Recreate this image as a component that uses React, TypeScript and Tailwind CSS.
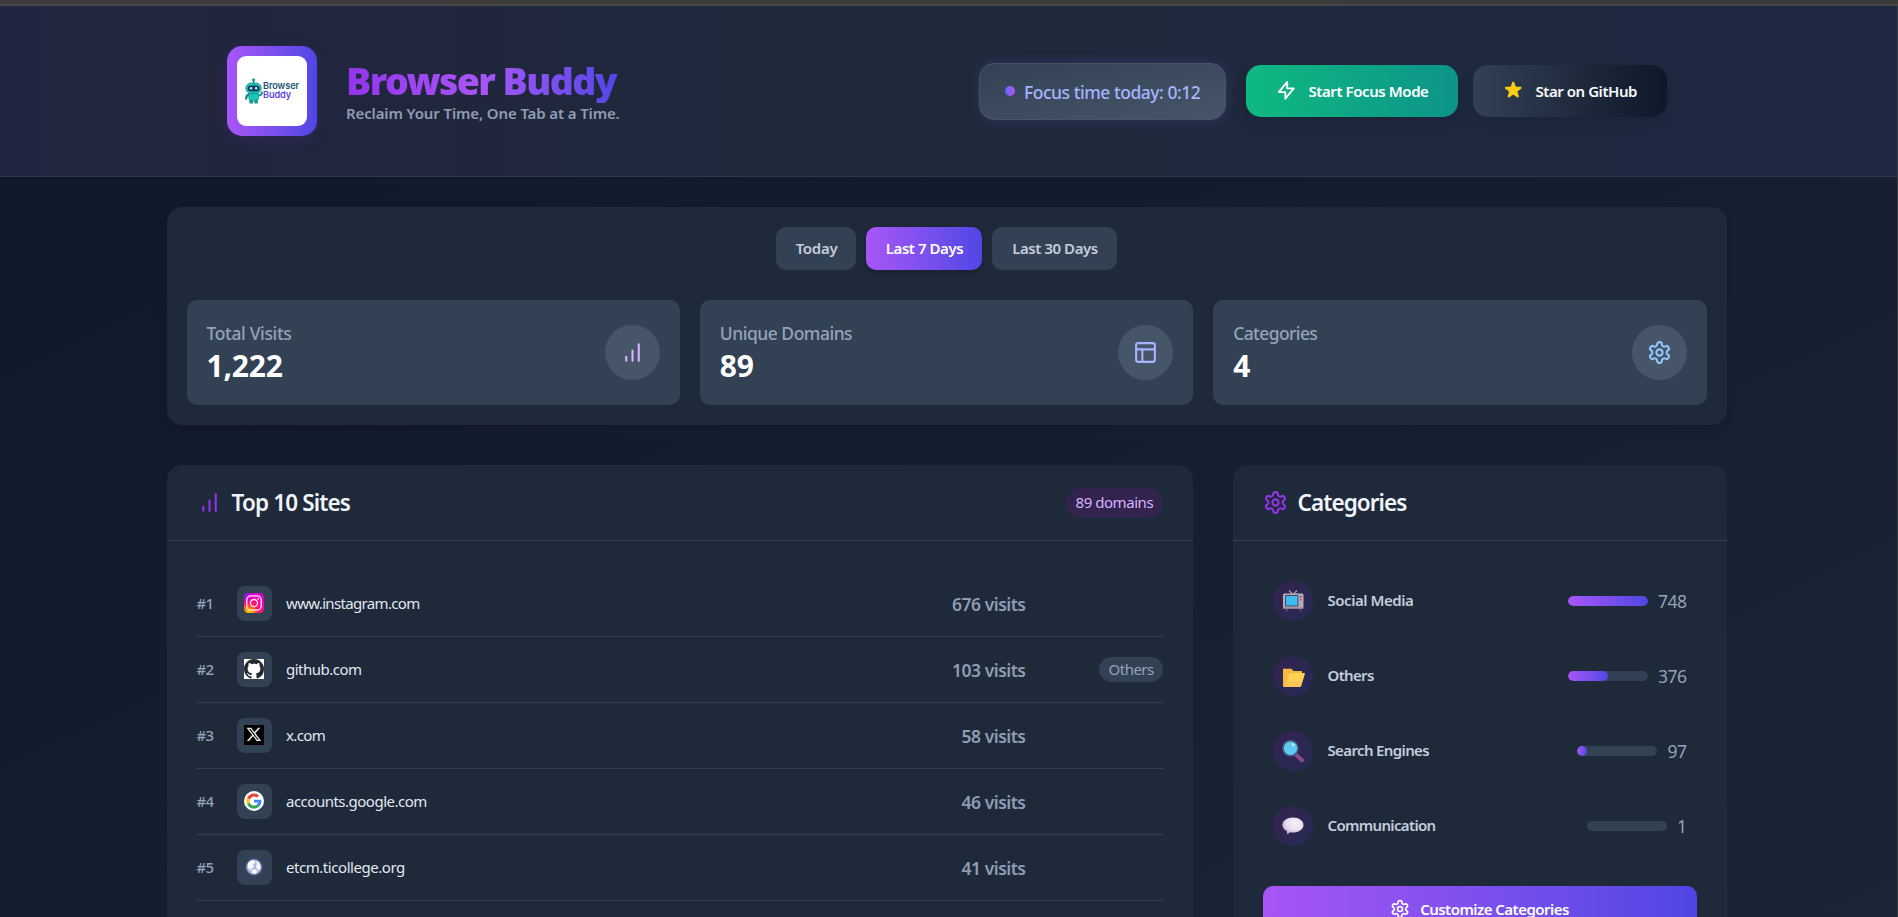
import type { ReactNode } from "react";

function BarsIcon({ className }: { className: string }) {
  return (
    <svg viewBox="0 0 24 24" fill="none" stroke="currentColor" strokeWidth="2" strokeLinecap="round" className={className}>
      <path d="M12 20V10M18 20V4M6 20v-4" />
    </svg>
  );
}

function GearIcon({ className }: { className: string }) {
  return (
    <svg viewBox="0 0 24 24" fill="none" stroke="currentColor" strokeWidth="2" strokeLinecap="round" strokeLinejoin="round" className={className}>
      <path d="M12.22 2h-.44a2 2 0 0 0-2 2v.18a2 2 0 0 1-1 1.73l-.43.25a2 2 0 0 1-2 0l-.15-.08a2 2 0 0 0-2.73.73l-.22.38a2 2 0 0 0 .73 2.73l.15.1a2 2 0 0 1 1 1.72v.51a2 2 0 0 1-1 1.74l-.15.09a2 2 0 0 0-.73 2.73l.22.38a2 2 0 0 0 2.73.73l.15-.08a2 2 0 0 1 2 0l.43.25a2 2 0 0 1 1 1.73V20a2 2 0 0 0 2 2h.44a2 2 0 0 0 2-2v-.18a2 2 0 0 1 1-1.73l.43-.25a2 2 0 0 1 2 0l.15.08a2 2 0 0 0 2.73-.73l.22-.39a2 2 0 0 0-.73-2.73l-.15-.08a2 2 0 0 1-1-1.74v-.5a2 2 0 0 1 1-1.74l.15-.09a2 2 0 0 0 .73-2.73l-.22-.38a2 2 0 0 0-2.73-.73l-.15.08a2 2 0 0 1-2 0l-.43-.25a2 2 0 0 1-1-1.73V4a2 2 0 0 0-2-2z" />
      <circle cx="12" cy="12" r="3" />
    </svg>
  );
}

function LayoutIcon({ className }: { className: string }) {
  return (
    <svg viewBox="0 0 24 24" fill="none" stroke="currentColor" strokeWidth="2" strokeLinecap="round" strokeLinejoin="round" className={className}>
      <rect x="3" y="3" width="18" height="18" rx="2" />
      <path d="M3 9h18M9 21V9" />
    </svg>
  );
}

function Robot() {
  return (
    <svg viewBox="0 0 18 26" className="h-[26px] w-[18px] shrink-0">
      <circle cx="8.6" cy="2" r="1.7" fill="#17a8a8" />
      <path d="M8.6 3v3" stroke="#1a5070" strokeWidth="1" />
      <path d="M3.5 16.5Q.8 18 1.2 20.6" stroke="#1a7a8c" strokeWidth="2.2" fill="none" strokeLinecap="round" />
      <path d="M13.5 17.5q2.8 0 3.6-3" stroke="#1a9a9c" strokeWidth="2.2" fill="none" strokeLinecap="round" />
      <rect x="4.4" y="21" width="3.6" height="4.6" rx="1.2" fill="#139a94" />
      <rect x="9.2" y="21" width="3.6" height="4.6" rx="1.2" fill="#139a94" />
      <rect x="3.8" y="14.5" width="9.8" height="8.2" rx="2.6" fill="#18c8b4" stroke="#147f86" strokeWidth=".6" />
      <rect x=".9" y="5" width="15.4" height="10.6" rx="5.2" fill="#1bcab8" stroke="#147f86" strokeWidth=".7" />
      <rect x="2.7" y="7.6" width="11.8" height="6" rx="3" fill="#123f63" />
      <circle cx="6.1" cy="10.3" r="1.2" fill="#bff5f2" />
      <circle cx="11.1" cy="10.3" r="1.2" fill="#bff5f2" />
    </svg>
  );
}

function Instagram() {
  return (
    <svg viewBox="0 0 20 20" className="size-5">
      <defs>
        <radialGradient id="ig" cx="0.2" cy="1.05" r="1.15">
          <stop offset="0" stopColor="#ffd600" />
          <stop offset=".22" stopColor="#ff9a00" />
          <stop offset=".45" stopColor="#ff1a5e" />
          <stop offset=".75" stopColor="#ff00a8" />
          <stop offset="1" stopColor="#d800d0" />
        </radialGradient>
        <radialGradient id="ig2" cx="0" cy="0" r=".6">
          <stop offset="0" stopColor="#5a1cff" />
          <stop offset="1" stopColor="#b400ff" stopOpacity="0" />
        </radialGradient>
      </defs>
      <rect width="20" height="20" rx="4.5" fill="url(#ig)" />
      <rect width="20" height="20" rx="4.5" fill="url(#ig2)" />
      <g fill="none" stroke="#fff" strokeOpacity=".9" strokeWidth="1.3">
        <rect x="2.800" y="2.800" width="14.400" height="14.400" rx="4.200" />
        <circle cx="10" cy="10" r="3.500" />
      </g>
      <circle cx="14.200" cy="5.800" r=".9" fill="#fff" />
    </svg>
  );
}

function Github() {
  return (
    <svg viewBox="0 0 16 16" className="size-5 bg-white">
      <path
        fill="#24292e"
        d="M8 0C3.58 0 0 3.58 0 8c0 3.54 2.29 6.53 5.47 7.59.4.07.55-.17.55-.38 0-.19-.01-.82-.01-1.49-2.01.37-2.53-.49-2.69-.94-.09-.23-.48-.94-.82-1.13-.28-.15-.68-.52-.01-.53.63-.01 1.08.58 1.23.82.72 1.21 1.87.87 2.33.66.07-.52.28-.87.51-1.07-1.78-.2-3.64-.89-3.64-3.95 0-.87.31-1.59.82-2.15-.08-.2-.36-1.02.08-2.12 0 0 .67-.21 2.2.82.64-.18 1.32-.27 2-.27s1.36.09 2 .27c1.53-1.04 2.2-.82 2.2-.82.44 1.1.16 1.92.08 2.12.51.56.82 1.27.82 2.15 0 3.07-1.87 3.75-3.65 3.95.29.25.54.73.54 1.48 0 1.07-.01 1.93-.01 2.2 0 .21.15.46.55.38A8.01 8.01 0 0 0 16 8c0-4.42-3.58-8-8-8z"
      />
    </svg>
  );
}

function XLogo() {
  return (
    <svg viewBox="0 0 20 20" className="size-5 bg-black">
      <path
        transform="translate(1.700 1.900) scale(.68)"
        fill="#e5e5e5"
        d="M18.24 1.25h3.31l-7.23 8.26 8.5 11.24h-6.65l-5.21-6.82-5.97 6.82H1.68l7.73-8.84L1.25 1.25h6.83l4.71 6.24zm-1.16 17.52h1.83L7.08 3.13H5.12z"
      />
    </svg>
  );
}

function Google() {
  return (
    <svg viewBox="0 0 20 20" className="size-5">
      <circle cx="10" cy="10" r="10" fill="#fff" />
      <g transform="translate(2.4 2.4) scale(.317)">
        <path fill="#FFC107" d="M10.53 28.59A14.5 14.5 0 0 1 9.77 24c0-1.6.27-3.14.76-4.59l-7.98-6.19A23.99 23.99 0 0 0 0 24c0 3.87.92 7.53 2.56 10.78z" />
        <path fill="#EA4335" d="M24 9.5c3.54 0 6.71 1.22 9.21 3.6l6.85-6.85C35.9 2.38 30.47 0 24 0 14.62 0 6.51 5.38 2.56 13.22l7.98 6.19C12.43 13.72 17.74 9.5 24 9.5z" />
        <path fill="#4285F4" d="M46.98 24.55c0-1.57-.15-3.09-.38-4.55H24v9.02h12.94c-.58 2.96-2.26 5.48-4.78 7.18l7.73 6c4.51-4.18 7.09-10.36 7.09-17.65z" />
        <path fill="#34A853" d="M24 48c6.48 0 11.93-2.13 15.89-5.81l-7.73-6c-2.15 1.45-4.92 2.3-8.16 2.3-6.26 0-11.57-4.22-13.47-9.91l-7.98 6.19C6.51 42.62 14.62 48 24 48z" />
      </g>
    </svg>
  );
}

function Globe() {
  return (
    <svg viewBox="0 0 20 20" className="size-5">
      <circle cx="10" cy="10" r="9" fill="#6468b0" opacity=".35" />
      <circle cx="10" cy="10" r="7.9" fill="#7c80c0" />
      <circle cx="10" cy="10" r="7" fill="#b0b8da" />
      <path fill="#f6f8ff" d="M3.800 7c1-2.400 3-3.600 5.700-3.900L11.500 5 9 7.500l1.200 2-1.800 1.500L6.500 13 3.800 11zM12 3.500l3 2 1.800 4-.8 3.500-3-.5-1-3 1-2.500zM7.500 13l3-1 3 2-1.500 2.800-3.500-.3z" />
    </svg>
  );
}

function Tv() {
  return (
    <svg viewBox="0 0 24 24" className="size-6">
      <path d="M8 1.500l3.500 3.500M16 1.500L12.500 5" stroke="#a9a0ae" strokeWidth="1.200" />
      <path d="M6.500 20l-1.300 2.500M18.800 20l1.200 2.500" stroke="#6b4a74" strokeWidth="1.600" />
      <rect x="2" y="4.500" width="20.500" height="15.500" rx="1.500" fill="#b8aebb" />
      <path d="M2 18.500h20.500v0a1.500 1.500 0 0 1-1.500 1.500H3.500A1.500 1.500 0 0 1 2 18.500z" fill="#8d7d95" />
      <rect x="4" y="6" width="13.500" height="11.500" rx="1" fill="#4d4356" />
      <rect x="5" y="7" width="11.500" height="9.500" fill="#3cbcf4" />
      <circle cx="19.800" cy="7.800" r="1" fill="#6b5a74" />
      <circle cx="19.800" cy="10.800" r="1" fill="#d0407a" />
    </svg>
  );
}

function Folder() {
  return (
    <svg viewBox="0 0 24 24" className="size-6">
      <path d="M2 4.700h8.500l2 2.300h8.500v4L6 23H3.500A1.500 1.500 0 0 1 2 21.500z" fill="#f9b844" />
      <path d="M9 9h14.200c.6 0 .9.500.7 1L20 22.300c-.2.500-.5.800-1 .8H2.700z" fill="#ffd352" />
      <path d="M5.400 17.200h16.200L20 22.300c-.2.500-.5.800-1 .8H2.700z" fill="#fdbf5b" opacity=".7" />
    </svg>
  );
}

function Magnifier() {
  return (
    <svg viewBox="0 0 24 24" className="size-6">
      <path d="M15.800 16.500l5.200 4.700" stroke="#8b4a86" strokeWidth="4.200" strokeLinecap="round" />
      <path d="M13.500 14l2.500 2.500" stroke="#5b5a78" strokeWidth="2" />
      <circle cx="9.500" cy="9.300" r="7.500" fill="#5ccbee" stroke="#4b5a86" strokeWidth="1.600" />
      <circle cx="12.300" cy="5.800" r="1.400" fill="#c9f1fb" />
    </svg>
  );
}

function Bubble() {
  return (
    <svg viewBox="0 0 24 24" className="size-6">
      <defs>
        <radialGradient id="bub" cx=".6" cy=".35" r=".7">
          <stop offset="0" stopColor="#f6f0f9" />
          <stop offset=".6" stopColor="#e6dcec" />
          <stop offset="1" stopColor="#b9a4c6" />
        </radialGradient>
      </defs>
      <path d="M12 3.600c6 0 10.500 3.200 10.500 7.400S18 18.600 12 18.600c-1 0-2-.1-2.900-.3-.8.900-2 1.600-3.300 2 .3-1 .3-2 0-3.200C3.200 15.800 1.400 13.600 1.400 11c0-4.200 4.600-7.400 10.600-7.400z" fill="url(#bub)" />
    </svg>
  );
}

const stats: { label: string; value: string; track: string; icon: ReactNode }[] = [
  { label: "Total Visits", value: "1,222", track: "tracking-[-0.36px]", icon: <BarsIcon className="size-[25px] text-[#d8b4fe]" /> },
  { label: "Unique Domains", value: "89", track: "tracking-[-0.5px]", icon: <LayoutIcon className="size-[25px] text-[#a5b4fc]" /> },
  { label: "Categories", value: "4", track: "tracking-[-0.6px]", icon: <GearIcon className="size-[25px] text-[#93c5fd]" /> },
];

const sites: { host: string; visits: number; track: string; icon: ReactNode; tag?: string }[] = [
  { host: "www.instagram.com", visits: 676, track: "tracking-[-0.66px]", icon: <Instagram /> },
  { host: "github.com", visits: 103, track: "tracking-[-0.5px]", icon: <Github />, tag: "Others" },
  { host: "x.com", visits: 58, track: "tracking-[-0.6px]", icon: <XLogo /> },
  { host: "accounts.google.com", visits: 46, track: "tracking-[-0.5px]", icon: <Google /> },
  { host: "etcm.ticollege.org", visits: 41, track: "tracking-[-0.45px]", icon: <Globe /> },
];

const categories: { name: string; count: number; track: string; icon: ReactNode }[] = [
  { name: "Social Media", count: 748, track: "tracking-[-0.46px]", icon: <Tv /> },
  { name: "Others", count: 376, track: "tracking-[-0.66px]", icon: <Folder /> },
  { name: "Search Engines", count: 97, track: "tracking-[-0.63px]", icon: <Magnifier /> },
  { name: "Communication", count: 1, track: "tracking-[-0.65px]", icon: <Bubble /> },
];

const barWidths: Record<number, number> = { 748: 80, 376: 40, 97: 10, 1: 0 };

function Header() {
  return (
    <header className="flex h-[171px] justify-center border-b border-[#2b374a] bg-linear-to-r from-[#22253f] via-[#1e293b] to-[#1f2943] pr-[3px]">
      <div className="flex h-[134px] w-[1440px] items-center justify-between pt-[1px]">
        <div className="flex items-center gap-[30px] pt-[34px]">
          <div className="flex size-[90px] items-center justify-center rounded-[15px] bg-linear-to-r from-[#a855f7] to-[#4f46e5] shadow-[0_4px_14px_rgba(147,51,234,0.12)]">
            <div className="flex size-[70px] items-center justify-center rounded-[9px] bg-white">
              <Robot />
              <div className="flex flex-col gap-px font-['Inter'] text-[9.2px] leading-[8px] font-semibold tracking-[-0.1px]">
                <div className="text-[#1d5475]">Browser</div>
                <div className="text-[#5b45e0]">Buddy</div>
              </div>
            </div>
          </div>
          <div className="-ml-px">
            <h1 className="bg-linear-to-r from-[#9333ea] via-[#a855f7] to-[#4f46e5] bg-clip-text text-[37.5px] leading-[44px] font-black tracking-[-1.6px] text-transparent">
              Browser Buddy
            </h1>
            <p className="text-[15px] leading-[20px] font-semibold tracking-[-0.12px] text-[#8f9db2]">Reclaim Your Time, One Tab at a Time.</p>
          </div>
        </div>
        <div className="flex items-center pt-[34px]">
          <div className="mt-px mr-[20px] flex h-[57px] w-[247px] items-center gap-[9px] rounded-[15px] border border-[#475569] bg-linear-to-br from-[#334155] to-[#475569] pl-[25px] shadow-[0_0_12px_rgba(139,92,246,0.2)]">
            <span className="mb-px size-[10px] rounded-full bg-linear-to-r from-[#6366f1] to-[#a855f7]" />
            <span className="pt-px text-[17.5px] leading-[24px] font-medium tracking-[-0.47px] whitespace-nowrap text-[#a5b4fc]">Focus time today: 0:12</span>
          </div>
          <button className="mr-[15px] flex h-[52px] w-[212px] items-center gap-[11px] rounded-[15px] bg-linear-to-r from-[#10b981] to-[#0d9488] pl-[29px] text-white shadow-[0_8px_14px_rgba(15,23,42,0.25)]">
            <svg viewBox="0 0 24 24" fill="none" stroke="currentColor" strokeWidth="2" strokeLinecap="round" strokeLinejoin="round" className="size-[22.5px]">
              <path d="M13 10V3L4 14h7v7l9-11h-7z" />
            </svg>
            <span className="text-[15px] leading-[20px] font-semibold tracking-[-0.42px] whitespace-nowrap">Start Focus Mode</span>
          </button>
          <button className="flex h-[52px] w-[194px] items-center gap-[11px] rounded-[15px] bg-linear-to-r from-[#334155] to-[#0f172a] pl-[29px] text-[#f8fafc] shadow-[0_8px_14px_rgba(15,23,42,0.25)]">
            <svg viewBox="0 0 20 20" fill="#facc15" className="size-[22.5px]">
              <path d="M9.049 2.927c.3-.921 1.603-.921 1.902 0l1.070 3.292a1 1 0 0 0 .950.690h3.462c.969 0 1.371 1.240.588 1.810l-2.800 2.034a1 1 0 0 0-.364 1.118l1.070 3.292c.300.921-.755 1.688-1.540 1.118l-2.800-2.034a1 1 0 0 0-1.175 0l-2.800 2.034c-.784.570-1.838-.197-1.539-1.118l1.070-3.292a1 1 0 0 0-.364-1.118L2.980 8.720c-.783-.570-.380-1.810.588-1.810h3.461a1 1 0 0 0 .951-.690l1.070-3.292z" />
            </svg>
            <span className="text-[15px] leading-[20px] font-semibold tracking-[-0.45px] whitespace-nowrap">Star on GitHub</span>
          </button>
        </div>
      </div>
    </header>
  );
}

function Overview() {
  return (
    <section className="h-[218px] rounded-[15px] bg-[#1e293a] p-[20px] shadow-[0_4px_8px_rgba(0,0,0,0.12)]">
      <div className="flex justify-center gap-[10px] text-[15px] leading-[20px] font-medium">
        <button className="h-[43px] w-[80px] rounded-[10px] bg-[#334155] pb-[2px] pl-px font-semibold tracking-[-0.3px] text-[#c3cddb]">Today</button>
        <button className="h-[43px] w-[116px] rounded-[10px] bg-linear-to-r from-[#a855f7] to-[#4f46e5] pb-[2px] pl-px font-semibold tracking-[-0.45px] text-white shadow-[0_3px_6px_rgba(0,0,0,0.2)]">Last 7 Days</button>
        <button className="h-[43px] w-[125px] rounded-[10px] bg-[#334155] pb-[2px] pl-px font-semibold tracking-[-0.45px] text-[#c3cddb]">Last 30 Days</button>
      </div>
      <div className="mt-[30px] grid grid-cols-3 gap-[20px]">
        {stats.map((s) => (
          <div key={s.label} className="flex h-[105px] items-center justify-between rounded-[10px] bg-[#334155] px-[20px]">
            <div>
              <div className={`text-[17.5px] leading-[27px] font-medium text-[#94a3b8] ${s.track}`}>{s.label}</div>
              <div className="text-[30px] leading-[38px] font-bold tracking-[-0.2px] text-white">{s.value}</div>
            </div>
            <div className="flex size-[55px] items-center justify-center rounded-full bg-[#475569]">{s.icon}</div>
          </div>
        ))}
      </div>
    </section>
  );
}

function TopSites() {
  return (
    <section className="w-[1026px] rounded-[15px] bg-[#1e293a]">
      <div className="flex h-[76px] items-center justify-between border-b border-[#334155] px-[30px]">
        <div className="flex items-center gap-[10px]">
          <BarsIcon className="size-[25px] text-[#9333ea]" />
          <h2 className="text-[22.5px] leading-[30px] font-semibold tracking-[-0.85px] text-[#f1f5f9]">Top 10 Sites</h2>
        </div>
        <span className="flex h-[30px] w-[97px] items-center rounded-full bg-[#32234f] pb-px pl-[10px] text-[15px] leading-[20px] tracking-[-0.45px] whitespace-nowrap text-[#d8b4fe]">89 domains</span>
      </div>
      <div className="px-[30px] pt-[30px]">
        {sites.map((s, i) => (
          <div key={s.host} className="flex h-[66px] items-center border-b border-[#334155]">
            <span className="w-[40px] pb-[2px] text-[15px] leading-[20px] font-medium tracking-[-0.7px] text-[#94a3b8]">#{i + 1}</span>
            <span className="flex size-[35px] items-center justify-center rounded-[8px] bg-[#334155] pr-px pb-px">{s.icon}</span>
            <span className={`ml-[14.500px] grow pb-[2px] text-[15px] leading-[20px] text-[#e2e8f0] ${s.track}`}>{s.host}</span>
            <span className="text-[17.5px] leading-[24px] font-semibold tracking-[-0.5px] text-[#8e9db2]">{s.visits} visits</span>
            <span className="flex w-[137px] justify-end pb-px">
              {s.tag && <span className="flex h-[25px] w-[64px] items-center rounded-full bg-[#334155] pb-px pl-[10px] text-[15px] leading-[20px] tracking-[-0.5px] text-[#94a3b8]">{s.tag}</span>}
            </span>
          </div>
        ))}
        <div className="flex h-[66px] items-center pl-[40px]">
          <span className="size-[35px] rounded-[8px] bg-[#334155]" />
        </div>
      </div>
    </section>
  );
}

function Categories() {
  return (
    <section className="w-[494px] rounded-[15px] bg-[#1e293a]">
      <div className="flex h-[76px] items-center gap-[10px] border-b border-[#334155] px-[30px]">
        <GearIcon className="size-[25px] text-[#9333ea]" />
        <h2 className="text-[22.5px] leading-[30px] font-semibold tracking-[-0.92px] text-[#f1f5f9]">Categories</h2>
      </div>
      <div className="px-[30px] pt-[30px]">
        {categories.map((c) => (
          <div key={c.name} className="mb-[15px] flex h-[60px] items-center px-[10px]">
            <span className="flex size-[40px] items-center justify-center rounded-full bg-linear-to-br from-[#33234f] to-[#262a56]">{c.icon}</span>
            <span className={`ml-[15px] grow pb-[2px] text-[15px] leading-[20px] font-semibold text-[#c3cddb] ${c.track}`}>{c.name}</span>
            <span className="h-[10px] w-[80px] overflow-hidden rounded-full bg-[#334155]">
              <span className="block h-full rounded-full bg-linear-to-r from-[#a855f7] to-[#4f46e5]" style={{ width: barWidths[c.count] }} />
            </span>
            <span className="ml-[10px] text-[17.5px] leading-[24px] tracking-[-0.5px] text-[#94a3b8]">{c.count}</span>
          </div>
        ))}
        <button className="mt-[30px] flex h-[46px] w-full items-center justify-center gap-[10px] rounded-[10px] bg-linear-to-r from-[#a855f7] to-[#4f46e5] text-white">
          <GearIcon className="size-[20px]" />
          <span className="text-[15px] leading-[20px] font-semibold tracking-[-0.53px]">Customize Categories</span>
        </button>
      </div>
    </section>
  );
}

export default function App() {
  return (
    <div className="flex h-[917px] flex-col overflow-hidden bg-[#3b3b3b] font-['Noto_Sans','Open_Sans',sans-serif]">
      <div className="h-[6px] shrink-0 border-b-2 border-[#474747] bg-[#3b3b3b]" />
      <div className="mr-px grow overflow-hidden bg-linear-to-br from-[#0f172a] to-[#1a2535]">
        <Header />
        <main className="flex justify-center pt-[30px] pr-[4px]">
          <div className="w-[1560px]">
            <Overview />
            <div className="mt-[40px] flex gap-[40px]">
              <TopSites />
              <Categories />
            </div>
          </div>
        </main>
      </div>
    </div>
  );
}
